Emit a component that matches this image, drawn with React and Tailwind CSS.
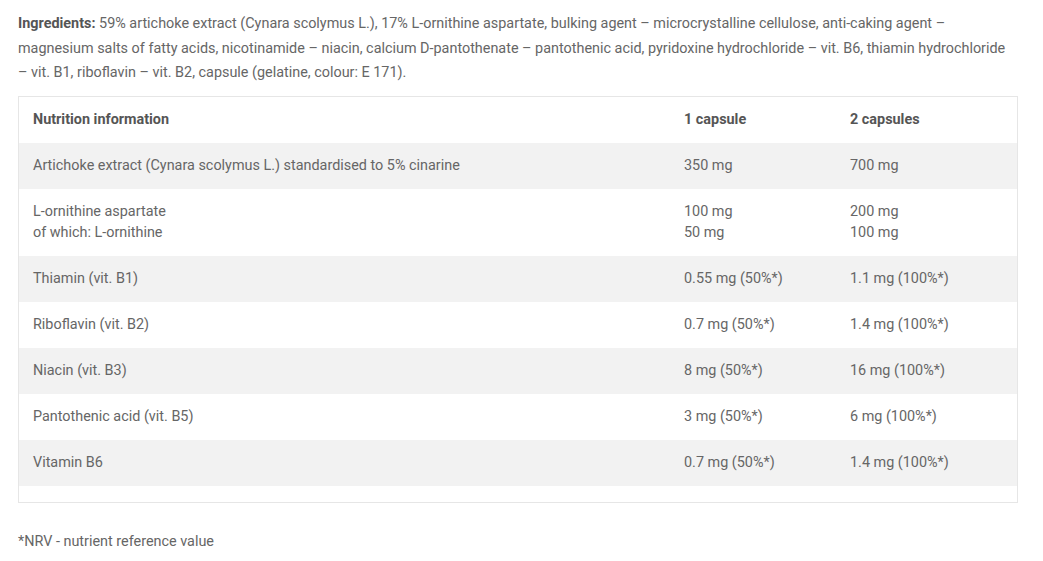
import React from "react";

const rows = [
  { name: ["Artichoke extract (Cynara scolymus L.) standardised to 5% cinarine"], a: ["350 mg"], b: ["700 mg"], gray: true },
  { name: ["L-ornithine aspartate", "of which: L-ornithine"], a: ["100 mg", "50 mg"], b: ["200 mg", "100 mg"], gray: false },
  { name: ["Thiamin (vit. B1)"], a: ["0.55 mg (50%*)"], b: ["1.1 mg (100%*)"], gray: true },
  { name: ["Riboflavin (vit. B2)"], a: ["0.7 mg (50%*)"], b: ["1.4 mg (100%*)"], gray: false },
  { name: ["Niacin (vit. B3)"], a: ["8 mg (50%*)"], b: ["16 mg (100%*)"], gray: true },
  { name: ["Pantothenic acid (vit. B5)"], a: ["3 mg (50%*)"], b: ["6 mg (100%*)"], gray: false },
  { name: ["Vitamin B6"], a: ["0.7 mg (50%*)"], b: ["1.4 mg (100%*)"], gray: true },
];

function Cell({ lines, bold }) {
  return (
    <div className={"px-[14px] py-[12.5px] leading-[21px] " + (bold ? "font-bold text-[#555]" : "")}>
      {lines.map((l, i) => (
        <div key={i}>{l}</div>
      ))}
    </div>
  );
}

export default function App() {
  return (
    <div
      className="w-[1043px] h-[561px] bg-white text-[14.4px] text-[#666] pl-[18px] pt-[12px]"
      style={{ fontFamily: "Roboto, 'Liberation Sans', sans-serif" }}
    >
      <p className="w-[1000px] leading-[24.5px]">
        <span className="font-bold text-[#555]">Ingredients:</span> 59% artichoke extract (Cynara scolymus L.), 17% L-ornithine aspartate, bulking agent – microcrystalline cellulose, anti-caking agent – magnesium salts of fatty acids, nicotinamide – niacin, calcium D-pantothenate – pantothenic acid, pyridoxine hydrochloride – vit. B6, thiamin hydrochloride – vit. B1, riboflavin – vit. B2, capsule (gelatine, colour: E 171).
      </p>
      <div className="mt-[10px] w-[1000px] border border-[#e6e6e6] pb-[16px]">
        <div className="grid grid-cols-[651px_166px_1fr]">
          <Cell lines={["Nutrition information"]} bold />
          <Cell lines={["1 capsule"]} bold />
          <Cell lines={["2 capsules"]} bold />
        </div>
        {rows.map((r, i) => (
          <div key={i} className={"grid grid-cols-[651px_166px_1fr] " + (r.gray ? "bg-[#f2f2f2]" : "bg-white")}>
            <Cell lines={r.name} />
            <Cell lines={r.a} />
            <Cell lines={r.b} />
          </div>
        ))}
      </div>
      <p className="mt-[27px] leading-[24.5px]">*NRV - nutrient reference value</p>
    </div>
  );
}
